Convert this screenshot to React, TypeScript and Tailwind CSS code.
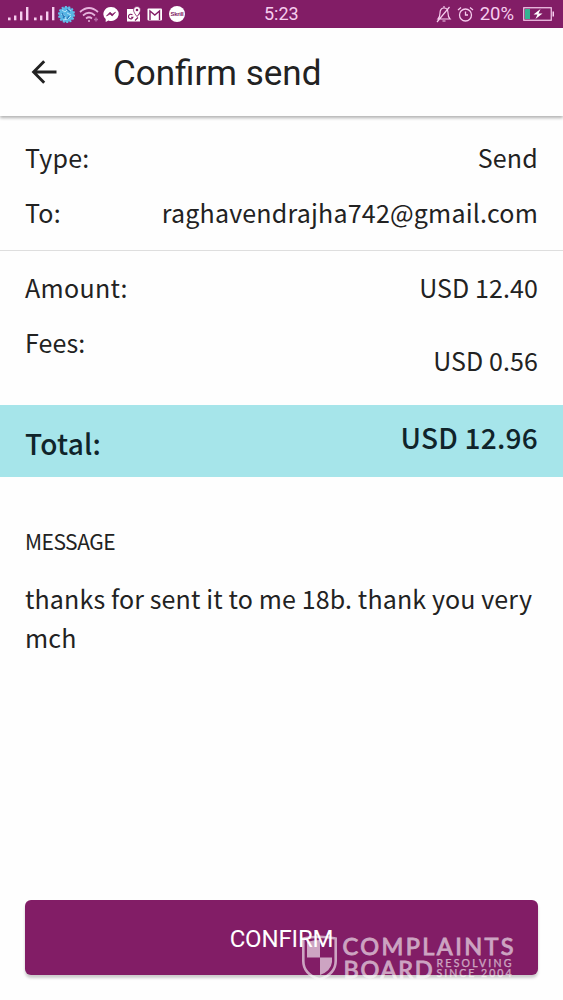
import type { ReactNode } from "react";

const sans = "font-['Noto_Sans_CJK_SC','Noto_Sans',sans-serif]";

function SignalBars() {
  return (
    <svg className="h-[16px] w-[21px]" viewBox="0 0 21 16" fill="#f6cdee">
      <rect x="0" y="11.5" width="2.6" height="2.8" />
      <rect x="6" y="9.5" width="2.4" height="4.8" />
      <rect x="12" y="5.5" width="2.4" height="8.8" />
      <rect x="18" y="1" width="2.4" height="13.3" />
    </svg>
  );
}

function StatusBar() {
  return (
    <header className="flex h-7 items-center bg-[#821d66] text-[#f6cdee]">
      <div className="flex w-[264px] items-center pl-2">
        <SignalBars />
        <div className="w-[5px]" />
        <SignalBars />
        <svg className="ml-[2px] h-[19px] w-[19px]" viewBox="0 0 19 19">
          <circle cx="9.5" cy="9.5" r="7.4" fill="#58b5e4" />
          <circle cx="9.5" cy="9.5" r="7.6" fill="none" stroke="#62bce9" strokeWidth="2" strokeDasharray="2 1.4" />
          <path d="M5 5l3 2 3-3 3 2M4 9l3 1 2 4M10 8l4 2M6 15l5-1 3-3" stroke="#b5e2fa" strokeWidth="1" fill="none" />
          <path d="M5 8l2 4M10 4l3 3M8 11l-2 2M12 11l-2 3" stroke="#2877b8" strokeWidth="1.2" fill="none" />
        </svg>
        <svg className="ml-[3px] h-[17px] w-[21px]" viewBox="0 0 21 17" fill="none" stroke="#e6b3dc" strokeWidth="1.7">
          <path d="M1 6Q10 -2 19 6M4 9.5Q10 4 16 9.5M7 12.5Q10 10 13 12.5" />
          <circle cx="10" cy="15" r="1" fill="#e6b3dc" stroke="none" />
          <path d="M15 13.5h4M17 11.5v4" stroke="#b56aa6" strokeWidth="1.4" />
        </svg>
        <svg className="ml-[3px] h-[17px] w-[16px]" viewBox="0 0 16 17">
          <path d="M8 1a7.5 7 0 0 0-5.3 12v3l2.7-1.500A7.5 7 0 1 0 8 1z" fill="#fff" />
          <path d="M3.5 10l3.5-3.800 2.200 2 3.300-2L9.200 10 7 8z" fill="#821d66" stroke="#821d66" strokeWidth=".7" />
        </svg>
        <svg className="ml-[7px] h-[17px] w-[15px]" viewBox="0 0 15 17">
          <path d="M1 3h7c0 4 1.500 6 3 7.500L14 8v7.500H1z" fill="#fff" />
          <path d="M11 .5A3.500 3.500 0 0 1 14.500 4c0 2.500-3.500 6.500-3.500 6.500S7.500 6.500 7.500 4A3.500 3.500 0 0 1 11 .5z" fill="#fff" stroke="#821d66" strokeWidth=".7" />
          <circle cx="11" cy="4" r="1.300" fill="#821d66" />
          <path d="M6.500 9A2.300 2.300 0 1 0 7 11.200H5M9 14.500l3-3" stroke="#821d66" strokeWidth="1.100" fill="none" />
        </svg>
        <svg className="ml-[6px] h-[13px] w-[16px]" viewBox="0 0 16 13">
          <rect x=".5" y=".5" width="14.500" height="12" rx="1" fill="#fff" />
          <path d="M3 12V3l4.800 4L12.500 3v9" stroke="#821d66" strokeWidth="1.400" fill="none" />
        </svg>
        <div className="ml-[6px] flex h-4 w-4 items-center justify-center rounded-full bg-white font-['Liberation_Sans',sans-serif] text-[6px] font-bold tracking-[-0.3px] text-[#821d66]">
          Skrill
        </div>
      </div>
      <div className="font-['Roboto',sans-serif] text-[18px] leading-7">5:23</div>
      <div className="ml-auto flex items-center pr-[8px]">
        <svg className="h-[18px] w-[16px]" viewBox="0 0 16 18" fill="none" stroke="#f6cdee" strokeWidth="1.200">
          <path d="M2 14h12c-1.500-1.500-2-3-2-6 0-3-1.500-5-4-5S4 5 4 8c0 3-.5 4.500-2 6zM8 1v2M6.500 16h3M1 17L13.500 2" />
        </svg>
        <svg className="ml-[5px] h-[17px] w-[17px]" viewBox="0 0 17 17" fill="none" stroke="#f6cdee" strokeWidth="1.300">
          <circle cx="8.500" cy="9" r="6" />
          <path d="M8.500 5.500V9H11M1 4l3-2.500M16 4l-3-2.500" />
        </svg>
        <div className="ml-[6px] font-['Roboto',sans-serif] text-[18.5px] leading-7">20%</div>
        <svg className="ml-[9px] h-[14px] w-[32px]" viewBox="0 0 32 14">
          <rect x=".75" y=".75" width="27.500" height="12.500" fill="none" stroke="#f6cdee" strokeWidth="1.200" />
          <rect x="2" y="2" width="5" height="10" fill="#35b391" />
          <path d="M17.500 2l-7 5.500h4L12.500 12l7-5.500h-4z" fill="#fff" />
          <rect x="29.500" y="4.500" width="1.500" height="5" fill="#f6cdee" />
        </svg>
      </div>
    </header>
  );
}

function Row({ label, children, className }: { label: string; children: ReactNode; className: string }) {
  return (
    <div className={`flex justify-between px-[25px] text-[25px] leading-[36px] ${className}`}>
      <span>{label}</span>
      {children}
    </div>
  );
}

function Watermark() {
  return (
    <svg className="absolute left-[300px] top-[932px] h-[52px] w-[220px]" viewBox="300 932 220 52" opacity=".6" fill="#fff">
      <path d="M303.300 938.500Q319 935 335.700 938.500V961Q335.700 974 319.500 979.500Q303.300 974 303.300 961Z" fill="none" stroke="#fff" strokeWidth="2.600" />
      <path d="M307 942Q313 940 320 940V957.500H307ZM320 957.500H332V962Q331 971 320 975Z" />
      <g fontFamily="Lato, sans-serif" fontWeight="400" fontSize="23.500" stroke="#fff" strokeWidth=".9">
        <text x="342.500" y="954.500" textLength="171">COMPLAINTS</text>
        <text x="343.500" y="977.500" textLength="89">BOARD</text>
      </g>
      <g fontFamily="Lato, sans-serif" fontWeight="400" fontSize="10.500" stroke="#fff" strokeWidth=".25">
        <text x="436.500" y="966.500" textLength="75">RESOLVING</text>
        <text x="436.500" y="977.300" textLength="75">SINCE 2004</text>
      </g>
    </svg>
  );
}

export default function App() {
  return (
    <div className={`relative flex h-[1000px] w-[563px] flex-col overflow-hidden bg-[#fefefe] text-[#222222] ${sans}`}>
      <StatusBar />
      <nav className="flex h-[88px] items-center bg-[#fefefe] shadow-[0_2px_3px_rgba(0,0,0,0.3)]">
        <svg className="ml-[31px] h-[26px] w-[26px]" viewBox="0 0 26 26" fill="none" stroke="#222" strokeWidth="2.900">
          <path d="M25.500 13H3M13.200 2.200L2.600 13L13.200 23.800" />
        </svg>
        <h1 className="ml-[56px] pt-[3px] font-['Roboto',sans-serif] text-[35px] leading-[85px]">Confirm send</h1>
      </nav>
      <main className="flex flex-1 flex-col">
        <section className="h-[135px] border-b-[1.5px] border-[#dedede] pt-[23px]">
          <Row label="Type:" className="h-[55px] tracking-[0.2px]"><span>Send</span></Row>
          <Row label="To:" className="h-[55px] tracking-[0.2px]"><span>raghavendrajha742@gmail.com</span></Row>
        </section>
        <section className="h-[154px] pt-[18px]">
          <Row label="Amount:" className="h-[55px] tracking-[0.3px]"><span className="tracking-[0.1px]">USD 12.40</span></Row>
          <Row label="Fees:" className="h-[73px] tracking-[0.1px]"><span className="pt-[18px]">USD 0.56</span></Row>
        </section>
        <section className="flex h-[72px] justify-between bg-[#a6e5ea] px-[25px] text-[28px] font-medium leading-[40px] tracking-[0.25px] text-[#10242a]">
          <span className="pt-[18px]">Total:</span>
          <span className="pt-[12px]">USD 12.96</span>
        </section>
        <section className="flex flex-col px-[25px] pt-[48px]">
          <h2 className="text-[21px] leading-[32px] tracking-[-0.5px]">MESSAGE</h2>
          <p className="mt-[22px] whitespace-nowrap text-[25px] leading-[39px] tracking-[0.13px]">
            thanks for sent it to me 18b. thank you very
            <br />
            mch
          </p>
        </section>
        <button className="mx-[25px] mb-[25px] mt-auto h-[75px] rounded-[6px] bg-[#821d66] pt-[2px] font-['Roboto',sans-serif] text-[24px] tracking-[-0.15px] text-white shadow-[0_3px_3px_rgba(0,0,0,0.2)]">
          CONFIRM
        </button>
      </main>
      <Watermark />
    </div>
  );
}
